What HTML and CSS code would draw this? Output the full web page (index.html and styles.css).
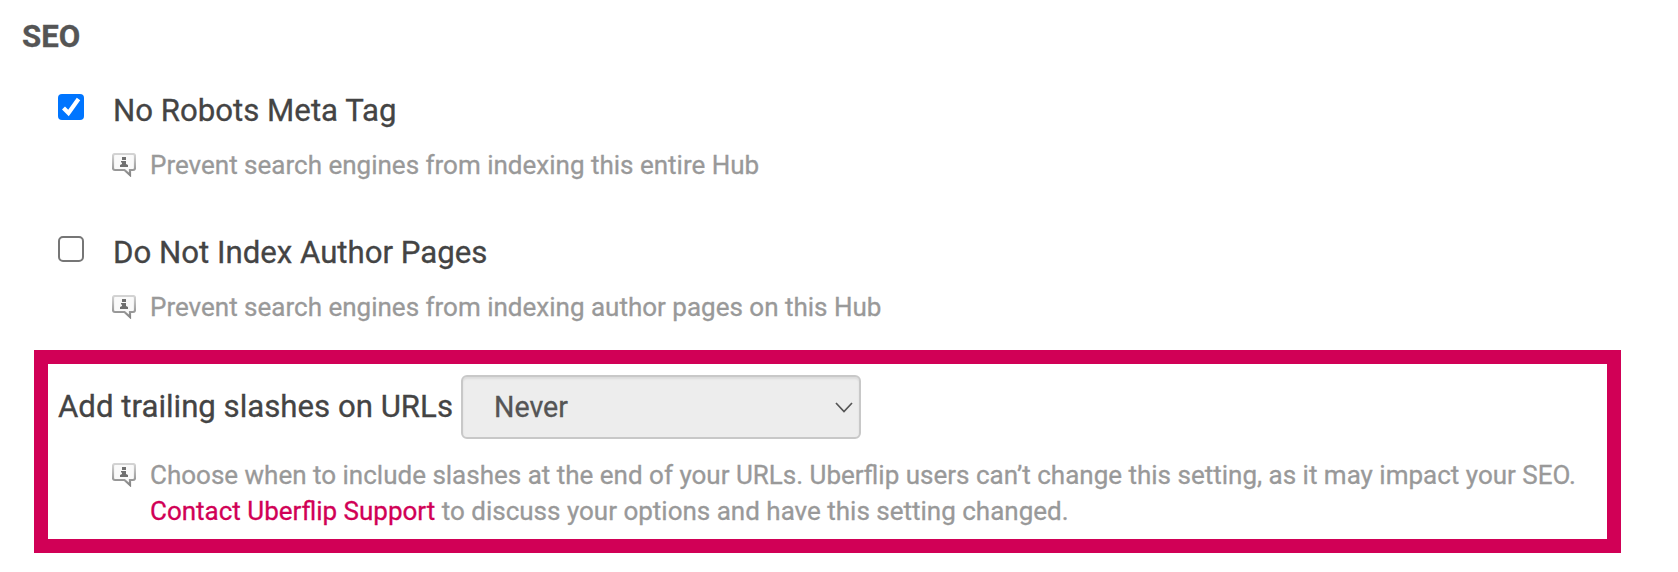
FILE: index.html
```html
<!DOCTYPE html>
<html lang="en">
<head>
    <meta charset="UTF-8">
    <meta name="viewport" content="width=device-width, initial-scale=1.0">
    <title>SEO</title>
    <link rel="stylesheet" href="styles.css">
</head>
<body>
    <!-- shared info bubble icon -->
    <svg class="sprite" width="0" height="0">
        <defs>
            <linearGradient id="bubbleStroke" x1="0" y1="0" x2="0" y2="1">
                <stop offset="0" stop-color="#d4d4d4"/>
                <stop offset="1" stop-color="#858585"/>
            </linearGradient>
        </defs>
        <symbol id="info" viewBox="0 0 24 24">
            <path d="M3 1h18q2 0 2 2v12q0 2-2 2h-3v5L12.500 17H3q-2 0-2-2V3q0-2 2-2z" fill="#fafafa" stroke="url(#bubbleStroke)" stroke-width="2.200"/>
            <path d="M10 4h4v3h-4zM9 8h5v3l2 1v2H8v-2l2-1V9.500H9z" fill="#707070"/>
        </symbol>
    </svg>

    <div class="settings">
        <h2 class="title">SEO</h2>

        <div class="option">
            <label class="option-label">
                <input type="checkbox" class="checkbox" checked>
                <span>No Robots Meta Tag</span>
            </label>
            <div class="hint">
                <svg class="hint-icon"><use href="#info"/></svg>
                <p class="hint-text">Prevent search engines from indexing this entire Hub</p>
            </div>
        </div>

        <div class="option">
            <label class="option-label">
                <input type="checkbox" class="checkbox">
                <span>Do Not Index Author Pages</span>
            </label>
            <div class="hint">
                <svg class="hint-icon"><use href="#info"/></svg>
                <p class="hint-text">Prevent search engines from indexing author pages on this Hub</p>
            </div>
        </div>

        <div class="highlight">
            <div class="select-row">
                <span class="select-label">Add trailing slashes on URLs</span>
                <div class="select">
                    <span class="select-value">Never</span>
                    <svg class="chevron" viewBox="0 0 18 11"><path d="M1 1l8 8.500L17 1"/></svg>
                </div>
            </div>
            <div class="hint">
                <svg class="hint-icon"><use href="#info"/></svg>
                <p class="hint-text">Choose when to include slashes at the end of your URLs. Uberflip users can’t change this setting, as it may impact your SEO.<br><a href="#" class="link">Contact Uberflip Support</a> to discuss your options and have this setting changed.</p>
            </div>
        </div>
    </div>
</body>
</html>
```
FILE: styles.css
```css
* {
    box-sizing: border-box;
}

body {
    margin: 0;
    background-color: white;
    font-family: Roboto, sans-serif;
    color: #444;
    -webkit-text-stroke: 0.3px currentColor;
}

.sprite {
    display: block;
}

.settings {
    padding: 18px 57px 0 22px;
    line-height: 36px;
}

.title {
    margin: 0 0 36px;
    font-size: 31.2px;
    font-weight: bold;
    line-height: 38px;
    color: #555;
}

.option {
    margin: 0 0 51px 36px;
}

.option-label {
    display: flex;
    height: 36px;
    font-size: 31.2px;
    line-height: 38px;
    white-space: nowrap;
}

.checkbox {
    appearance: none;
    flex: none;
    width: 26px;
    height: 26px;
    margin: 2px 29px 0 0;
    border: 2px solid #767676;
    border-radius: 5px;
    background-color: white;
}

.checkbox:checked {
    border: none;
    border-radius: 4px;
    background: #0075ff url("data:image/svg+xml,%3Csvg xmlns='http://www.w3.org/2000/svg' viewBox='0 0 26 26'%3E%3Cpath d='M5.500 14L10.500 19L20.500 5' fill='none' stroke='white' stroke-width='4.200'/%3E%3C/svg%3E");
}

.hint {
    display: flex;
    margin: 19px 0 0 54px;
    font-size: 26px;
    color: #999;
}

.hint-icon {
    flex: none;
    width: 24px;
    height: 24px;
    margin: 6px 14px 0 0;
}

.hint-text {
    margin: 0;
    white-space: nowrap;
}

.link {
    color: #d10056;
    text-decoration: none;
}

.highlight {
    height: 203px;
    margin: -26px 0 0 12px;
    padding: 11px 0 0 10px;
    border: 14px solid #d10056;
}

.select-row {
    display: flex;
    height: 64px;
    font-size: 31.2px;
    white-space: nowrap;
}

.select-label {
    width: 403px;
    padding-top: 14px;
}

.select {
    display: flex;
    align-items: center;
    justify-content: space-between;
    width: 400px;
    padding: 0 6px 0 31px;
    border: 2px solid #c8c8c8;
    border-radius: 6px;
    background-color: #ededed;
    box-shadow: inset 0 2px 2px rgba(0, 0, 0, 0.08);
    font-size: 28.6px;
    color: #555;
}

.chevron {
    width: 18px;
    height: 11px;
    fill: none;
    stroke: #555;
    stroke-width: 1.7;
}

.highlight .hint {
    margin-top: 18px;
}
```
